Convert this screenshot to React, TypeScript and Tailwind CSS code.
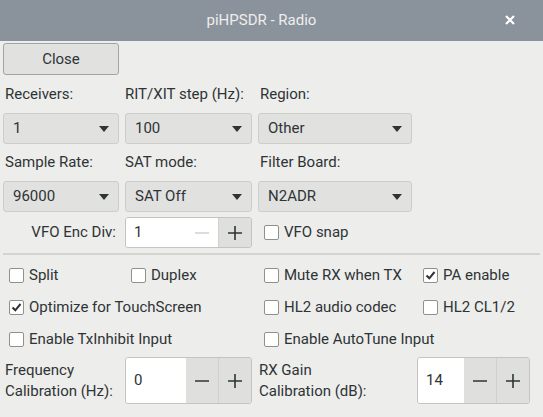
import React from 'react';

const font = { fontFamily: 'Roboto, "Noto Sans", sans-serif' };

const Combo = ({ value, width }: { value: string; width: string }) => (
  <div className={`${width} h-[31px] flex items-center justify-between pl-[9px] pr-[9px] bg-[#e1e1e0] border border-[#cdcdcb] rounded-[3px] text-[#2e3436]`}>
    <span>{value}</span>
    <svg width="10" height="6" viewBox="0 0 10 6">
      <path d="M0 0 L10 0 L5 6 Z" fill="#2e3436" />
    </svg>
  </div>
);

const Spin = ({ value, entryW, tall, minusOff }: { value: string; entryW: string; tall?: boolean; minusOff?: boolean }) => (
  <div className={`flex ${tall ? 'h-[47px]' : 'h-[31px]'} border border-[#c4c4c2] rounded-[3px] overflow-hidden`}>
    <div className={`${entryW} bg-white flex items-center pl-[8px] text-[#2e3436]`}>{value}</div>
    <div className={`w-[33px] flex items-center justify-center border-r border-[#d0d0ce] ${minusOff ? 'bg-white' : 'bg-[#dfdfdd]'}`}>
      <svg width="16" height="16" viewBox="0 0 16 16">
        <path d="M1 8 H15" stroke={minusOff ? '#d0d0ce' : '#2e3436'} strokeWidth="1.6" />
      </svg>
    </div>
    <div className="w-[33px] flex items-center justify-center bg-[#dfdfdd]">
      <svg width="16" height="16" viewBox="0 0 16 16">
        <path d="M1 8 H15 M8 1 V15" stroke="#2e3436" strokeWidth="1.6" />
      </svg>
    </div>
  </div>
);

const Check = ({ label, checked }: { label: string; checked?: boolean }) => (
  <div className="flex items-center gap-[5px] pl-[6px] text-[#2e3436]">
    <div className="w-[15px] h-[15px] bg-white border border-[#8e918c] rounded-[2px] flex items-center justify-center">
      {checked && (
        <svg width="11" height="11" viewBox="0 0 11 11">
          <path d="M1.5 5.5 L4.3 8.3 L9.5 2" stroke="#2e3436" strokeWidth="2" fill="none" />
        </svg>
      )}
    </div>
    <span>{label}</span>
  </div>
);

export default function App() {
  return (
    <div className="w-[543px] h-[417px] bg-[#ededeb] text-[15px] overflow-hidden" style={font}>
      {/* header */}
      <div className="h-[41px] bg-[#8a929c] flex items-center relative">
        <div className="flex-1 text-center text-[#eeeeec] pr-[20px]">piHPSDR - Radio</div>
        <svg className="absolute right-[28px] top-[15px]" width="10" height="10" viewBox="0 0 10 10">
          <path d="M1 1 L9 9 M9 1 L1 9" stroke="#ffffff" strokeWidth="2.2" />
        </svg>
      </div>

      <div className="pl-[3px] pt-[2px]">
        <button className="w-[116px] h-[32px] bg-[#e1e1e0] border border-[#a3a3a1] rounded-[3px] text-[#2e3436]">Close</button>

        <div className="grid grid-cols-[116px_127px_153px_123px] gap-x-[6px] text-[#2e3436]">
          <div className="h-[38px] flex items-center pl-[2px]">Receivers:</div>
          <div className="h-[38px] flex items-center">RIT/XIT step (Hz):</div>
          <div className="h-[38px] flex items-center pl-[2px] col-span-2">Region:</div>

          <Combo value="1" width="w-[116px]" />
          <Combo value="100" width="w-[127px]" />
          <Combo value="Other" width="w-[154px]" />
          <div />

          <div className="h-[37px] flex items-center pl-[2px]">Sample Rate:</div>
          <div className="h-[37px] flex items-center">SAT mode:</div>
          <div className="h-[37px] flex items-center pl-[2px] col-span-2">Filter Board:</div>

          <Combo value="96000" width="w-[116px]" />
          <Combo value="SAT Off" width="w-[127px]" />
          <Combo value="N2ADR" width="w-[154px]" />
          <div />

          <div className="mt-[5px] flex items-center justify-end pr-[3px]">VFO Enc Div:</div>
          <div className="mt-[5px]">
            <Spin value="1" entryW="w-[61px]" minusOff />
          </div>
          <div className="mt-[5px] flex items-center col-span-2">
            <Check label="VFO snap" />
          </div>
        </div>

        <div className="mt-[5px] mr-[3px] h-[2px] bg-[#d3d3d1]" />

        <div className="grid grid-cols-[116px_127px_153px_123px] gap-x-[6px] auto-rows-[32px] mt-[4px] text-[#2e3436]">
          <Check label="Split" />
          <Check label="Duplex" />
          <Check label="Mute RX when TX" />
          <Check label="PA enable" checked />

          <div className="col-span-2 flex items-center"><Check label="Optimize for TouchScreen" checked /></div>
          <Check label="HL2 audio codec" />
          <Check label="HL2 CL1/2" />

          <div className="col-span-2 flex items-center"><Check label="Enable TxInhibit Input" /></div>
          <div className="col-span-2 flex items-center"><Check label="Enable AutoTune Input" /></div>
        </div>

        <div className="grid grid-cols-[116px_127px_153px_123px] gap-x-[6px] mt-[2px] text-[#2e3436]">
          <div className="flex flex-col justify-center leading-[21px] pl-[2px]">
            <span>Frequency</span>
            <span>Calibration (Hz):</span>
          </div>
          <Spin value="0" entryW="w-[61px]" tall />
          <div className="flex flex-col justify-center leading-[21px] pl-[1px]">
            <span>RX Gain</span>
            <span>Calibration (dB):</span>
          </div>
          <div className="w-[113px]">
            <Spin value="14" entryW="w-[47px]" tall />
          </div>
        </div>
      </div>
    </div>
  );
}
